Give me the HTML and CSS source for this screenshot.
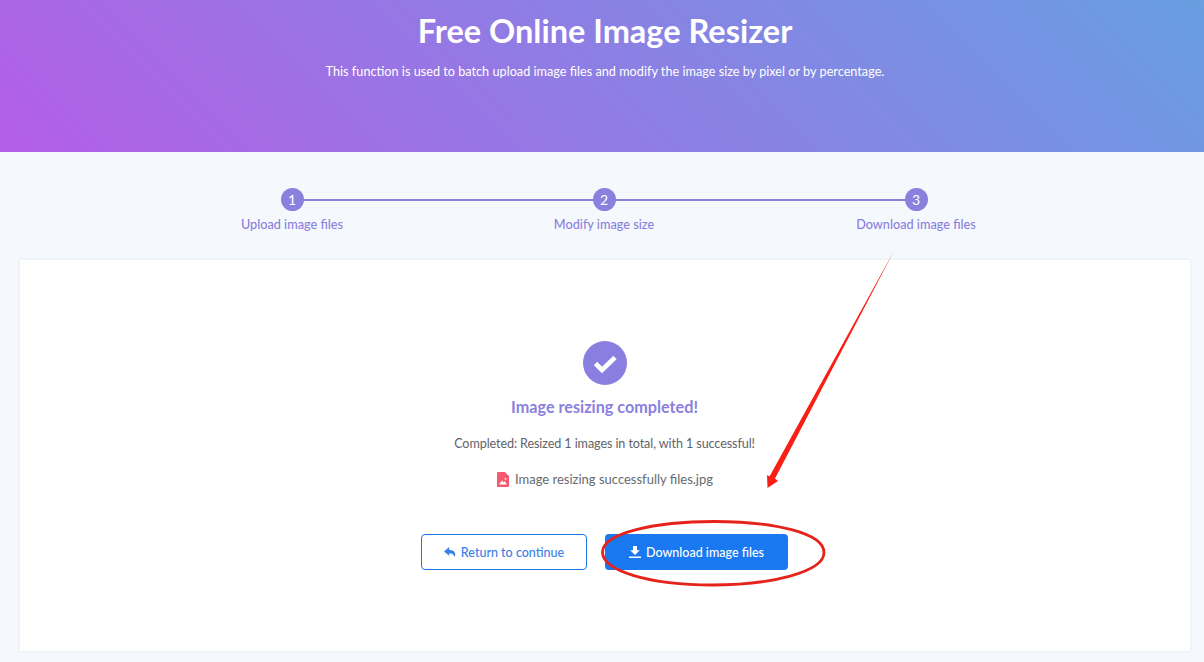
FILE: index.html
```html
<!DOCTYPE html>
<html lang="en">
<head>
<meta charset="utf-8">
<title>Free Online Image Resizer</title>
<link rel="stylesheet" href="styles.css">
</head>
<body>
<header class="hero">
  <h1 class="hero-title">Free Online Image Resizer</h1>
  <p class="hero-sub">This function is used to batch upload image files and modify the image size by pixel or by percentage.</p>
</header>
<main class="main">
  <ol class="steps">
    <li class="step"><span class="step-num">1</span><span class="step-label">Upload image files</span></li>
    <li class="step"><span class="step-num">2</span><span class="step-label">Modify image size</span></li>
    <li class="step"><span class="step-num">3</span><span class="step-label">Download image files</span></li>
  </ol>
  <section class="card">
    <svg class="done-icon" viewBox="0 0 44 44" width="44" height="44" aria-hidden="true">
      <circle cx="22" cy="22" r="22" fill="#8a7fe0"/>
      <path d="M12.5 22.5l6.5 6.5L32 16.5" fill="none" stroke="#fff" stroke-width="4.6"/>
    </svg>
    <h2 class="done-title">Image resizing completed!</h2>
    <p class="done-text">Completed: Resized 1 images in total, with 1 successful!</p>
    <p class="file">
      <svg class="file-icon" viewBox="0 0 12 15" width="12" height="15" aria-hidden="true">
        <path d="M0 1a1 1 0 0 1 1-1h6.8L12 4v10a1 1 0 0 1-1 1H1a1 1 0 0 1-1-1z" fill="#f5596e"/>
        <path d="M2 12.5l3-4 1.6 1.7 1.2-1 2.2 3.3z" fill="#fff"/>
        <circle cx="8.5" cy="6.8" r=".9" fill="#fff"/>
      </svg>
      <span>Image resizing successfully files.jpg</span>
    </p>
    <div class="actions">
      <a class="btn btn-outline">
        <svg viewBox="0 0 12 11" width="12" height="11" aria-hidden="true"><path d="M5.2 0L0 4.4l5.2 4.4V6.2c2.6 0 4.5.7 5.4 3.8C12.6 5.7 9.6 2.9 5.2 2.7z" fill="currentColor"/></svg>
        Return to continue
      </a>
      <a class="btn btn-solid">
        <svg viewBox="0 0 12 12" width="12" height="12" aria-hidden="true"><path d="M4 0h4v4.2h2.8L6 9 1.2 4.2H4zM0 10.4h12V12H0z" fill="currentColor"/></svg>
        Download image files
      </a>
    </div>
  </section>
</main>
<svg class="annotations" viewBox="0 0 1204 662" width="1204" height="662" aria-hidden="true">
  <path d="M894.5 250L775 478.5 778 481 767.5 488 767 475 769.5 476.5z" fill="#fa1f14"/>
  <path d="M714 521.5C774 521.5 824 533 824 552.5C824 572 771 585 712 585C650 585 602 571 602.5 552C603 533 655 521.5 714 521.5z" fill="none" stroke="#e5231b" stroke-width="2.8"/>
</svg>
</body>
</html>
```

FILE: styles.css
```css
* { box-sizing: border-box; }
html, body { margin: 0; padding: 0; }
body {
  width: 1204px;
  height: 662px;
  overflow: hidden;
  position: relative;
  background: #f5f9fd;
  font-family: "Lato", "Liberation Sans", sans-serif;
}
.hero {
  height: 152px;
  padding: 10px 0 0 6px;
  text-align: center;
  color: #fff;
  background: linear-gradient(45deg, #b45ee6 0%, #689ee2 100%);
}
.hero-title {
  margin: 0;
  font-size: 32.5px;
  line-height: 42px;
  font-weight: 700;
}
.hero-sub {
  margin: 10px 0 0;
  font-size: 12.7px;
  line-height: 18px;
}
.main {
  padding: 36px 14px 0 20px;
}
.steps {
  list-style: none;
  margin: 0;
  padding: 0 0 0 116px;
  display: grid;
  grid-template-columns: repeat(3, 312px);
  height: 72px;
}
.step {
  position: relative;
  display: flex;
  flex-direction: column;
  align-items: center;
  gap: 4px;
}
.step:not(:last-child)::after {
  content: "";
  position: absolute;
  top: 11px;
  left: 50%;
  width: 100%;
  height: 2px;
  background: #8a80de;
}
.step-num {
  position: relative;
  z-index: 1;
  width: 23px;
  height: 23px;
  border-radius: 50%;
  background: #8a80de;
  color: #fff;
  font-size: 14px;
  line-height: 23px;
  text-align: center;
}
.step-label {
  color: #8a80de;
  font-size: 12.7px;
  line-height: 18px;
  font-weight: 500;
  white-space: nowrap;
}
.card {
  height: 391px;
  background: #fff;
  box-shadow: 0 0 3px rgba(40, 60, 90, .1);
  display: flex;
  flex-direction: column;
  align-items: center;
  padding-top: 81px;
}
.done-icon { display: block; margin-right: 1px; }
.done-title {
  margin: 11px 1px 0 0;
  color: #8a80de;
  font-size: 16.2px;
  line-height: 22px;
  font-weight: 700;
}
.done-text {
  margin: 17px 1px 0 0;
  color: #5f6368;
  font-size: 12.6px;
  line-height: 18px;
  letter-spacing: -.1px;
}
.file {
  margin: 17px 0 0;
  display: flex;
  align-items: center;
  gap: 6px;
  color: #666a70;
  font-size: 13px;
  line-height: 18px;
}
.actions {
  margin: 46px 1px 0 0;
  display: flex;
  gap: 18px;
}
.btn {
  height: 36px;
  border-radius: 4px;
  display: flex;
  align-items: center;
  justify-content: center;
  gap: 5px;
  font-size: 12.5px;
  font-weight: 500;
}
.btn-outline {
  width: 166px;
  border: 1px solid #1e78e6;
  color: #3a80e4;
  background: #fff;
}
.btn-solid {
  width: 183px;
  background: #1a78f0;
  color: #fff;
}
.annotations {
  position: absolute;
  left: 0;
  top: 0;
  pointer-events: none;
}
```
